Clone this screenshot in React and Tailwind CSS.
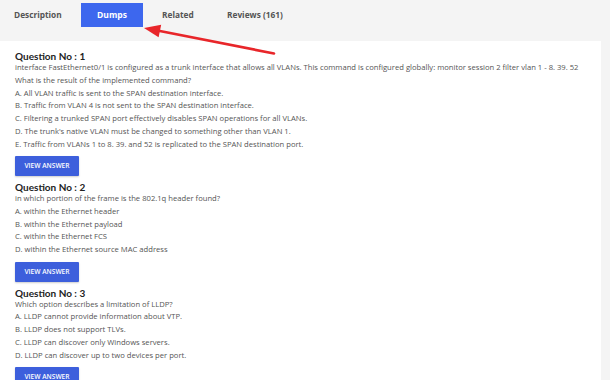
export default function App() {
  const questions = [
    {
      n: 1,
      lines: [
        "interface FastEthernet0/1 is configured as a trunk interface that allows all VLANs. This command is configured globally: monitor session 2 filter vlan 1 - 8. 39. 52",
        "What is the result of the implemented command?",
      ],
      options: [
        "A. All VLAN traffic is sent to the SPAN destination interface.",
        "B. Traffic from VLAN 4 is not sent to the SPAN destination interface.",
        "C. Filtering a trunked SPAN port effectively disables SPAN operations for all VLANs.",
        "D. The trunk's native VLAN must be changed to something other than VLAN 1.",
        "E. Traffic from VLANs 1 to 8. 39. and 52 is replicated to the SPAN destination port.",
      ],
    },
    {
      n: 2,
      lines: ["in which portion of the frame is the 802.1q header found?"],
      options: [
        "A. within the Ethernet header",
        "B. within the Ethernet payload",
        "C. within the Ethernet FCS",
        "D. within the Ethernet source MAC address",
      ],
    },
    {
      n: 3,
      lines: ["Which option describes a limitation of LLDP?"],
      options: [
        "A. LLDP cannot provide information about VTP.",
        "B. LLDP does not support TLVs.",
        "C. LLDP can discover only Windows servers.",
        "D. LLDP can discover up to two devices per port.",
      ],
    },
  ];
  return (
    <div className="relative w-[610px] h-[380px] overflow-hidden bg-[#f4f4f4] font-['Open_Sans',sans-serif]">
      <div className="flex pt-[3px] h-[41px]">
        <div className="w-[76px] pl-[14px] h-[24px] flex items-center text-[8.3px] font-bold text-[#555]">Description</div>
        <div className="ml-[5px] w-[62px] h-[24px] flex items-center justify-center text-[8.5px] font-bold text-white bg-[#3d67ee]">Dumps</div>
        <div className="ml-[19px] w-[65px] h-[24px] flex items-center text-[8.3px] font-bold text-[#555]">Related</div>
        <div className="h-[24px] flex items-center text-[8.3px] font-bold text-[#555]">Reviews (161)</div>
      </div>
      <div className="w-[601px] h-[339px] bg-white px-[15px] pt-[10px]">
        {questions.map((q) => (
          <div key={q.n} className="mb-[6px]">
            <div className="font-['Lato',sans-serif] font-bold text-[10px] leading-[10px] text-[#222]">
              Question No : {q.n}
            </div>
            <div className="text-[7.65px] leading-[12.8px] text-[#555] whitespace-nowrap">
              {q.lines.map((l, i) => (
                <div key={i}>{l}</div>
              ))}
              {q.options.map((l, i) => (
                <div key={i}>{l}</div>
              ))}
            </div>
            <div className="mt-[5.5px] w-[64px] h-[20px] bg-[#3d5fdc] rounded-[1px] shadow-[0_1px_2px_rgba(0,0,0,0.2)] flex items-center justify-center text-white text-[6.6px] font-semibold">
              VIEW ANSWER
            </div>
          </div>
        ))}
      </div>
      <svg className="absolute left-0 top-0" width="610" height="80" viewBox="0 0 610 80">
        <line x1="156" y1="30.2" x2="274" y2="53.5" stroke="#e8262a" strokeWidth="2.6" strokeLinecap="round" />
        <polygon points="144,28 161.2,24.8 158.6,37.2" fill="#e8262a" />
      </svg>
    </div>
  );
}
